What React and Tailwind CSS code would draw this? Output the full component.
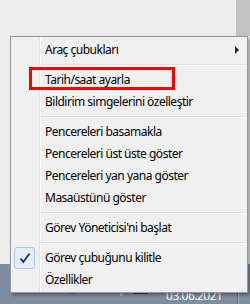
import React from 'react';

const items = [
  { label: 'Araç çubukları', submenu: true },
  { sep: true },
  { label: 'Tarih/saat ayarla' },
  { label: 'Bildirim simgelerini özelleştir' },
  { sep: true },
  { label: 'Pencereleri basamakla' },
  { label: 'Pencereleri üst üste göster' },
  { label: 'Pencereleri yan yana göster' },
  { label: 'Masaüstünü göster' },
  { sep: true },
  { label: "Görev Yöneticisi'ni başlat" },
  { sep: true },
  { label: 'Görev çubuğunu kilitle', checked: true },
  { label: 'Özellikler' },
];

function MenuItem({ item }) {
  if (item.sep) {
    return (
      <div className="h-[8px] pt-[3px] ml-[30px] mr-[1px]">
        <div className="h-px bg-[#e0e0e0]" />
        <div className="h-px bg-white" />
      </div>
    );
  }
  return (
    <div className="h-[22px] flex items-center">
      <div className="w-[34px] h-full shrink-0 pl-[3px]">
        {item.checked && (
          <div className="w-[21px] h-[22px] rounded-[3px] border border-[#a8c4e6] bg-[#e6eefa] flex items-center justify-center">
            <svg width="12" height="12" viewBox="0 0 12 12">
              <path d="M1.5 6.5 L4.3 10 L10.5 1.5" fill="none" stroke="#1b2a8c" strokeWidth="1.8" />
            </svg>
          </div>
        )}
      </div>
      <span className="flex-1 text-[12px] tracking-[-0.5px] text-black leading-none">{item.label}</span>
      {item.submenu && (
        <div className="mr-[8px] w-0 h-0 border-y-[4px] border-y-transparent border-l-[4px] border-l-[#222]" />
      )}
    </div>
  );
}

export default function App() {
  return (
    <div className="relative w-[250px] h-[304px] overflow-hidden bg-[#ececec] font-['Noto_Sans',sans-serif]">
      {/* desktop area */}
      <div className="flex flex-col h-full">
        <div className="h-[267px] flex flex-col">
          <div className="h-[36px] flex">
            <div className="flex-1" />
            <div className="w-[14px] bg-[#c2c2c2]" />
          </div>
          <div className="flex-1" />
        </div>

        {/* taskbar */}
        <div className="flex-1 flex bg-[#7d8da0]">
          <div className="w-[65px]" />
          <div className="pt-[15px]">
            <div className="w-[15px] h-[15px] rounded-full bg-[#2b7cd3]" />
          </div>
          <div className="ml-[9px] pt-[20px]">
            <div className="w-[11px] h-[9px] bg-[#c0282a] border-b-2 border-[#5b1e1e]" />
          </div>
          <div className="ml-[19px] pt-[25px] text-[#c8d0d8] text-[8px] leading-none">v</div>
          <div className="ml-[10px] pt-[28px]">
            <div className="w-[15px] h-[2px] bg-[#2e3a46]" />
          </div>
          <div className="ml-[18px] pt-[24px] text-white text-[12px] leading-[16px] tracking-[-0.5px]">03.06.2021</div>
          <div className="flex-1" />
          <div className="w-px bg-[#5d6c7c]" />
          <div className="w-px bg-[#a3b0bd]" />
          <div className="w-[11px]" />
        </div>
      </div>

      {/* context menu */}
      <div className="absolute left-[10px] top-[36px] w-[238px] border border-[#979797] pt-[2px] pb-px shadow-[2px_2px_3px_rgba(0,0,0,0.35)] bg-[linear-gradient(to_right,#f0f0f0_28px,#e2e3e3_28px,#e2e3e3_29px,#ffffff_29px,#ffffff_30px,#f0f0f0_30px)]">
        {items.map((item, i) => (
          <MenuItem key={i} item={item} />
        ))}
      </div>

      {/* highlight */}
      <div className="absolute left-[29px] top-[67px] w-[146px] h-[23px] border-[3px] border-[#ff0000]" />
    </div>
  );
}
